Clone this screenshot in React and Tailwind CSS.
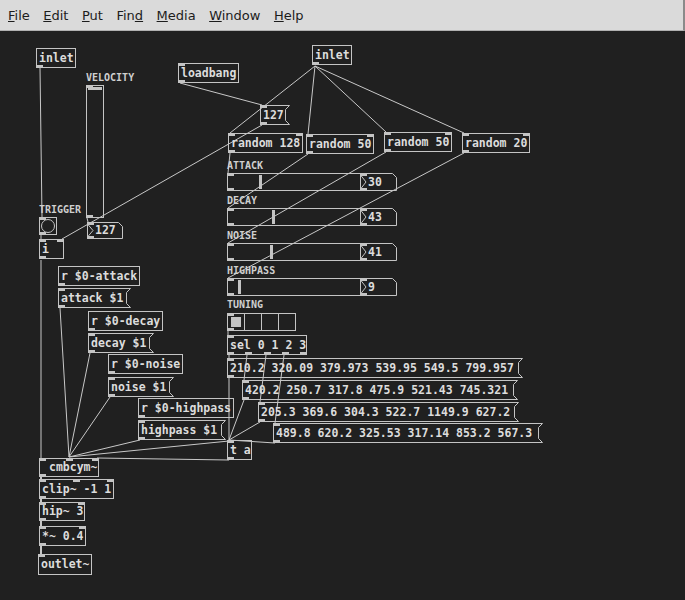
import React from 'react';

// canvas items are in window coordinates; the canvas starts under the 31px menu bar
const OY = 31;

const OBJS = [
  { x: 36, y: 48, w: 40, t: 'inlet', ins: 0, outs: 1 },
  { x: 312, y: 45, w: 40, t: 'inlet', ins: 0, outs: 1 },
  { x: 178, y: 63, w: 61, t: 'loadbang', ins: 1, outs: 1 },
  { x: 228, y: 133, w: 75, t: 'random 128', ins: 2, outs: 1 },
  { x: 306, y: 134, w: 68, t: 'random 50', ins: 2, outs: 1 },
  { x: 384, y: 132, w: 68, t: 'random 50', ins: 2, outs: 1 },
  { x: 462, y: 133, w: 68, t: 'random 20', ins: 2, outs: 1 },
  { x: 227, y: 335, w: 80, t: 'sel 0 1 2 3', ins: 1, outs: 5 },
  { x: 227, y: 440, w: 25, t: 't a', ins: 1, outs: 1 },
  { x: 39, y: 239, w: 25, t: 'i', ins: 2, outs: 1 },
  { x: 58, y: 266, w: 82, t: 'r $0-attack', ins: 0, outs: 1 },
  { x: 88, y: 311, w: 75, t: 'r $0-decay', ins: 0, outs: 1 },
  { x: 108, y: 354, w: 75, t: 'r $0-noise', ins: 0, outs: 1 },
  { x: 138, y: 398, w: 96, t: 'r $0-highpass', ins: 0, outs: 1 },
  { x: 39, y: 458, w: 60, h: 19, t: 'cmbcym~', ins: 3, outs: 1, pl: 9 },
  { x: 39, y: 479, w: 75, t: 'clip~ -1 1', ins: 3, outs: 1 },
  { x: 39, y: 502, w: 46, h: 19, t: 'hip~ 3', ins: 2, outs: 1 },
  { x: 39, y: 526, w: 47, t: '*~ 0.4', ins: 2, outs: 1 },
  { x: 38, y: 554, w: 54, h: 21, t: 'outlet~', ins: 1, outs: 0 },
];

const MSGS = [
  { x: 260, y: 105, w: 25, t: '127' },
  { x: 58, y: 288, w: 68, t: 'attack $1' },
  { x: 88, y: 333, w: 61, t: 'decay $1' },
  { x: 108, y: 377, w: 61, t: 'noise $1' },
  { x: 138, y: 420, w: 83, t: 'highpass $1' },
  { x: 227, y: 358, w: 291, t: '210.2 320.09 379.973 539.95 549.5 799.957' },
  { x: 242, y: 380, w: 271, t: '420.2 250.7 317.8 475.9 521.43 745.321' },
  { x: 258, y: 402, w: 256, t: '205.3 369.6 304.3 522.7 1149.9 627.2' },
  { x: 273, y: 423, w: 265, t: '489.8 620.2 325.53 317.14 853.2 567.3' },
];

const SLIDERS = [
  { label: 'ATTACK', y: 173, hx: 259, v: '30' },
  { label: 'DECAY', y: 208, hx: 272, v: '43' },
  { label: 'NOISE', y: 243, hx: 270, v: '41' },
  { label: 'HIGHPASS', y: 278, hx: 238, v: '9' },
];

const WIRES = [
  [40, 68, 42, 217],
  [41, 235, 41, 239],
  [41, 260, 41, 458],
  [180, 83, 262, 105],
  [262, 125, 62, 239],
  [87, 218, 88, 222],
  [315, 66, 230, 133],
  [315, 66, 308, 134],
  [315, 66, 386, 132],
  [315, 66, 464, 133],
  [230, 153, 228, 173],
  [308, 154, 228, 208],
  [386, 152, 228, 243],
  [464, 153, 228, 278],
  [228, 330, 228, 335],
  [229, 355, 229, 358],
  [247, 355, 244, 380],
  [266, 355, 260, 402],
  [284, 355, 275, 423],
  [229, 378, 229, 440],
  [244, 400, 229, 440],
  [260, 422, 229, 440],
  [275, 443, 229, 440],
  [60, 308, 69, 457],
  [90, 353, 69, 457],
  [110, 397, 69, 457],
  [140, 440, 69, 457],
  [229, 441, 69, 457],
  [229, 460, 97, 458],
];

const SIG = [
  [41, 477, 41, 479],
  [41, 499, 41, 502],
  [41, 521, 41, 526],
  [41, 546, 41, 554],
];

function Nubs({ n, w, side }) {
  if (!n) return null;
  return Array.from({ length: n }, (_, i) => {
    const left = n === 1 ? 0 : Math.round((i * (w - 7)) / (n - 1));
    return (
      <span
        key={i}
        className={`absolute h-[3px] w-[7px] bg-[#c4c4c4] ${side === 'top' ? 'top-0' : 'bottom-0'}`}
        style={{ left }}
      />
    );
  });
}

function Obj({ x, y, w, h = 20, t, ins, outs, pl = 2 }) {
  return (
    <div className="absolute" style={{ left: x, top: y - OY, width: w, height: h }}>
      <div className="absolute inset-0 border border-[#c4c4c4]" />
      <div className="absolute inset-0 flex items-center whitespace-pre pt-[1px] text-[#dcdcdc]" style={{ paddingLeft: pl + 1 }}>
        {t}
      </div>
      <Nubs n={ins} w={w} side="top" />
      <Nubs n={outs} w={w} side="bottom" />
    </div>
  );
}

function Msg({ x, y, w, h = 20, t }) {
  return (
    <div className="absolute" style={{ left: x, top: y - OY, width: w + 5, height: h }}>
      <svg className="absolute inset-0" width={w + 5} height={h}>
        <polygon
          points={`0.5,0.5 ${w + 4.5},0.5 ${w + 0.5},4.5 ${w + 0.5},${h - 4.5} ${w + 4.5},${h - 0.5} 0.5,${h - 0.5}`}
          fill="none"
          stroke="#c4c4c4"
        />
      </svg>
      <div className="absolute inset-0 flex items-center whitespace-pre pt-[1px] pl-[3px] text-[#dcdcdc]">{t}</div>
      <Nubs n={1} w={w} side="top" />
      <Nubs n={1} w={w} side="bottom" />
    </div>
  );
}

function Atom({ x, y, w = 37, h = 18, v }) {
  return (
    <div className="absolute" style={{ left: x, top: y - OY, width: w, height: h }}>
      <svg className="absolute inset-0" width={w} height={h}>
        <polygon
          points={`0.5,0.5 ${w - 4.5},0.5 ${w - 0.5},4.5 ${w - 0.5},${h - 0.5} 0.5,${h - 0.5}`}
          fill="none"
          stroke="#c4c4c4"
        />
        <polyline points={`0.5,2 6,${h / 2} 0.5,${h - 2}`} fill="none" stroke="#c4c4c4" />
      </svg>
      <div className="absolute inset-0 flex items-center pt-[1px] pl-[8px] text-[#dcdcdc]">{v}</div>
      <Nubs n={1} w={w} side="top" />
      <Nubs n={1} w={w} side="bottom" />
    </div>
  );
}

function Label({ x, y, t }) {
  return (
    <div className="absolute text-[10px] leading-none font-bold text-[#cfcfcf]" style={{ left: x, top: y - OY }}>
      {t}
    </div>
  );
}

function HSlider({ y, hx, label, v }) {
  return (
    <>
      <Label x={227} y={y - 12} t={label} />
      <div className="absolute border border-[#c4c4c4]" style={{ left: 227, top: y - OY, width: 134, height: 18 }}>
        <span className="absolute top-[-1px] left-[-1px] h-[3px] w-[7px] bg-[#c4c4c4]" />
        <span className="absolute bottom-[-1px] left-[-1px] h-[3px] w-[7px] bg-[#c4c4c4]" />
        <span className="absolute top-[1px] bottom-[1px] w-[3px] bg-[#c4c4c4]" style={{ left: hx - 228 }} />
      </div>
      <Atom x={360} y={y} v={v} />
    </>
  );
}

export default function App() {
  return (
    <div className="flex h-[600px] w-[685px] flex-col overflow-hidden bg-[#202020]">
      <div className="flex h-[31px] shrink-0 items-center gap-[13.5px] border-b border-[#b0b0b0] border-r-2 border-r-[#8a8a8a] bg-[#dadada] pt-[1px] pl-[8px] font-['DejaVu_Sans',sans-serif] text-[13px] text-[#1c1c1c]">
        <span><span className="underline">F</span>ile</span>
        <span><span className="underline">E</span>dit</span>
        <span><span className="underline">P</span>ut</span>
        <span>Fin<span className="underline">d</span></span>
        <span><span className="underline">M</span>edia</span>
        <span><span className="underline">W</span>indow</span>
        <span><span className="underline">H</span>elp</span>
      </div>

      <div className="relative flex-1 font-['DejaVu_Sans_Mono',monospace] text-[11.5px] font-bold">
        <svg className="pointer-events-none absolute inset-0" width="685" height="569" viewBox="0 31 685 569">
          {WIRES.map((l, i) => (
            <line key={i} x1={l[0]} y1={l[1]} x2={l[2]} y2={l[3]} stroke="#c8c8c8" strokeWidth="1" />
          ))}
          {SIG.map((l, i) => (
            <line key={i} x1={l[0]} y1={l[1]} x2={l[2]} y2={l[3]} stroke="#c8c8c8" strokeWidth="2" />
          ))}
        </svg>

        {OBJS.map((o, i) => (
          <Obj key={i} {...o} />
        ))}
        {MSGS.map((m, i) => (
          <Msg key={i} {...m} />
        ))}

        <Label x={86} y={73} t="VELOCITY" />
        <div className="absolute border border-[#c4c4c4]" style={{ left: 86, top: 85 - OY, width: 18, height: 133 }}>
          <span className="absolute top-[-1px] left-[-1px] h-[3px] w-[7px] bg-[#c4c4c4]" />
          <span className="absolute bottom-[-1px] left-[-1px] h-[3px] w-[7px] bg-[#c4c4c4]" />
          <span className="absolute top-[1px] left-[1px] right-[1px] h-[3px] bg-[#c4c4c4]" />
        </div>
        <Atom x={87} y={222} w={36} h={17} v="127" />

        <Label x={39} y={205} t="TRIGGER" />
        <div className="absolute flex items-center justify-center border border-[#c4c4c4]" style={{ left: 39, top: 217 - OY, width: 18, height: 18 }}>
          <span className="absolute top-[-1px] left-[-1px] h-[3px] w-[7px] bg-[#c4c4c4]" />
          <span className="absolute bottom-[-1px] left-[-1px] h-[3px] w-[7px] bg-[#c4c4c4]" />
          <span className="h-[14px] w-[14px] rounded-full border border-[#c4c4c4]" />
        </div>

        {SLIDERS.map((s) => (
          <HSlider key={s.label} {...s} />
        ))}

        <Label x={227} y={300} t="TUNING" />
        <div className="absolute flex" style={{ left: 227, top: 313 - OY }}>
          {[0, 1, 2, 3].map((i) => (
            <div
              key={i}
              className={`relative flex h-[18px] w-[18px] items-center justify-center border border-[#c4c4c4] ${i > 0 ? 'ml-[-1px]' : ''}`}
            >
              {i === 0 && <span className="h-[10px] w-[10px] bg-[#c4c4c4]" />}
              {i === 0 && <span className="absolute bottom-[-1px] left-[-1px] h-[3px] w-[7px] bg-[#c4c4c4]" />}
              {i === 0 && <span className="absolute top-[-1px] left-[-1px] h-[3px] w-[7px] bg-[#c4c4c4]" />}
            </div>
          ))}
        </div>
      </div>
    </div>
  );
}
